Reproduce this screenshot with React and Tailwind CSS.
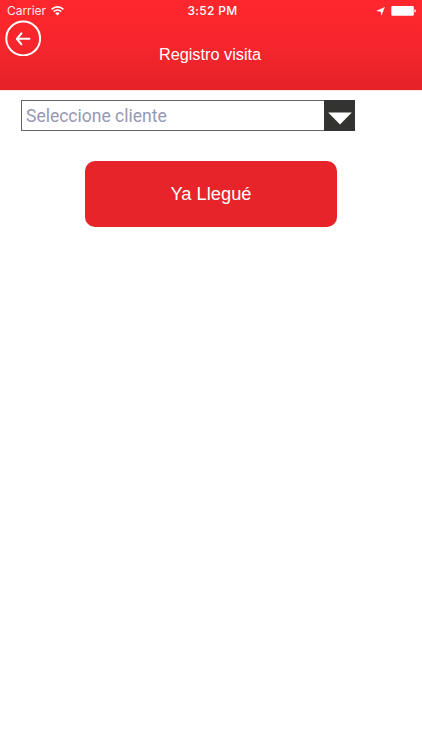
function StatusBar() {
    return (
        <div className="grid h-[22px] grid-cols-3 items-center pl-[7px] pr-[6px] text-[12px] leading-[22px] font-['Inter',sans-serif]">
            <div className="flex items-center gap-[5px]">
                <span className="tracking-[-0.05px] opacity-90">Carrier</span>
                <svg width="13" height="10" viewBox="0 0 13 10" fill="none" stroke="currentColor" strokeWidth="1.6">
                    <path d="M0.6 3.4 C4 0 9 0 12.4 3.4" />
                    <path d="M2.7 5.7 C5 3.6 8 3.6 10.3 5.7" />
                    <path d="M4.3 7.2 C5.7 6 7.3 6 8.7 7.2 L6.5 9.5 Z" fill="currentColor" stroke="none" />
                </svg>
            </div>
            <span className="pl-[2px] text-center font-medium tracking-[0.3px]">3:52 PM</span>
            <div className="flex items-center justify-end gap-[6px]">
                <svg width="9" height="9" viewBox="0 0 9 9" fill="currentColor">
                    <path d="M8.9 0 L5.3 8.9 L4.8 4.7 L0 4.1 Z" />
                </svg>
                <svg width="25" height="10" viewBox="0 0 25 10" fill="currentColor">
                    <rect x="0.3" y="0" width="22.5" height="9.8" rx="1" />
                    <path d="M23.4 3.2 Q24.9 3.6 24.9 4.9 Q24.9 6.2 23.4 6.6 Z" />
                </svg>
            </div>
        </div>
    );
}

function Header() {
    return (
        <header className="h-[90px] bg-gradient-to-b from-[#ff272d] via-[#f6262c] to-[#e42227] text-white">
            <StatusBar />
            <div className="grid h-[68px] grid-cols-[48px_1fr_50px]">
                <button aria-label="Volver" className="h-[36px] w-[36px] ml-[5px] -mt-[2px]">
                    <svg width="36" height="36" viewBox="0 0 36 36" fill="none" stroke="currentColor">
                        <circle cx="18.2" cy="18.5" r="16.9" strokeWidth="2" />
                        <path d="M24.4 18.8 H12.2 M16.4 13.3 L11.9 18.8 L16.4 24.3" strokeWidth="2.1" strokeLinecap="round" strokeLinejoin="round" />
                    </svg>
                </button>
                <h1 className="pt-[20px] text-center text-[16.3px] leading-[24px] font-['Liberation_Sans',Arial,sans-serif]">
                    Registro visita
                </h1>
            </div>
        </header>
    );
}

function ClientSelect() {
    return (
        <div className="ml-[21px] flex h-[31px] w-[334px] border border-[#646464]">
            <span className="flex-1 pl-[4px] text-[17.5px] leading-[30px] text-[#9698b3] font-['Roboto',sans-serif]">
                Seleccione cliente
            </span>
            <button aria-label="Abrir lista" className="-m-px flex w-[31px] items-center justify-center bg-[#333331]">
                <svg width="24" height="13" viewBox="0 0 24 13" fill="white" className="mt-[6px]">
                    <path d="M0.2 0.5 H23.8 L12 12.5 Z" />
                </svg>
            </button>
        </div>
    );
}

export default function App() {
    return (
        <div className="min-h-screen w-[422px] bg-white">
            <Header />
            <main className="border-t border-[#ffe4ea] pt-[9px]">
                <ClientSelect />
                <button className="mx-auto mt-[30px] block h-[66px] w-[252px] rounded-[10px] bg-[#e62429] text-[18.3px] text-white font-['Liberation_Sans',Arial,sans-serif]">
                    Ya Llegué
                </button>
            </main>
        </div>
    );
}
